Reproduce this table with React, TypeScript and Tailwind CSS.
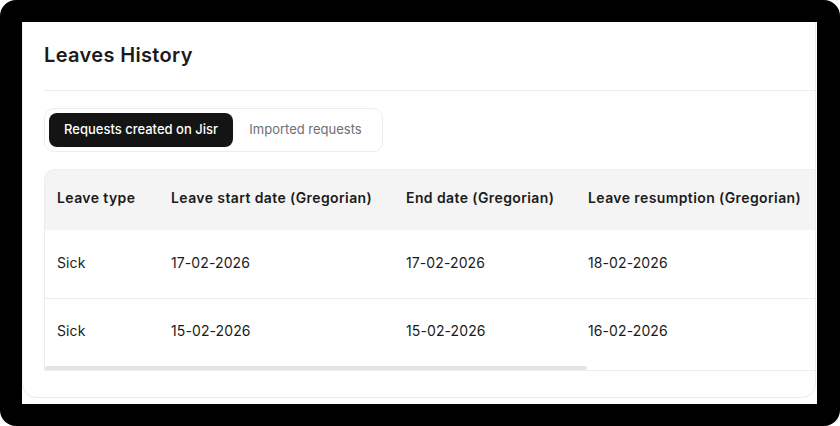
import React from "react";

type LeaveRow = {
  type: string;
  start: string;
  end: string;
  resumption: string;
};

const ROWS: LeaveRow[] = [
  { type: "Sick", start: "17-02-2026", end: "17-02-2026", resumption: "18-02-2026" },
  { type: "Sick", start: "15-02-2026", end: "15-02-2026", resumption: "16-02-2026" },
];

const COLS = "grid grid-cols-[114px_235px_182px_260px_1fr]";

export default function App() {
  return (
    <div className="w-[840px] h-[426px] bg-white font-['Inter',sans-serif] text-[#1b1b1b]">
      <div className="w-full h-full bg-black rounded-[16px] pt-[22px] pl-[22px] pr-[23px] pb-[22px]">
        <div className="w-full h-full bg-white overflow-hidden">
          {/* card, top edge is scrolled out of view */}
          <div className="-mt-[20px] h-[396px] w-[794px] border border-[#ebebeb] rounded-[14px] overflow-hidden pl-[21px] pt-[38px]">
            <h2 className="text-[20px] leading-[28px] font-semibold tracking-[0.35px]">Leaves History</h2>
            <div className="mt-[21px] h-px bg-[#ececec]" />

            <div className="mt-[17px] inline-flex p-[4px] border border-[#ececec] rounded-[10px]">
              <button
                type="button"
                className="w-[184px] h-[34px] rounded-[8px] bg-[#141414] text-white text-[13px] font-medium pb-[1px]"
              >
                Requests created on Jisr
              </button>
              <button type="button" className="w-[145px] h-[34px] text-[13px] text-[#6f6f6f] pb-[1px]">
                Imported requests
              </button>
            </div>

            <div className="mt-[17px] w-[900px] border-x border-t border-[#ececec] rounded-t-[10px] overflow-hidden">
              <div
                className={`${COLS} h-[60px] items-center bg-[#f4f4f4] text-[14px] font-semibold tracking-[0.4px] pl-[12px] pb-[6px]`}
              >
                <span>Leave type</span>
                <span>Leave start date (Gregorian)</span>
                <span>End date (Gregorian)</span>
                <span>Leave resumption (Gregorian)</span>
                <span />
              </div>
              {ROWS.map((row, i) => (
                <div
                  key={i}
                  className={`${COLS} h-[68px] items-center text-[14px] tracking-[0.1px] pl-[12px] pb-[4px] ${i > 0 ? "border-t border-[#ececec]" : ""}`}
                >
                  <span>{row.type}</span>
                  <span>{row.start}</span>
                  <span>{row.end}</span>
                  <span>{row.resumption}</span>
                  <span />
                </div>
              ))}
              <div className="h-[5px] border-b border-[#ececec]">
                <div className="w-[542px] h-[4px] bg-[#e4e4e4] rounded-full" />
              </div>
            </div>
          </div>
        </div>
      </div>
    </div>
  );
}
